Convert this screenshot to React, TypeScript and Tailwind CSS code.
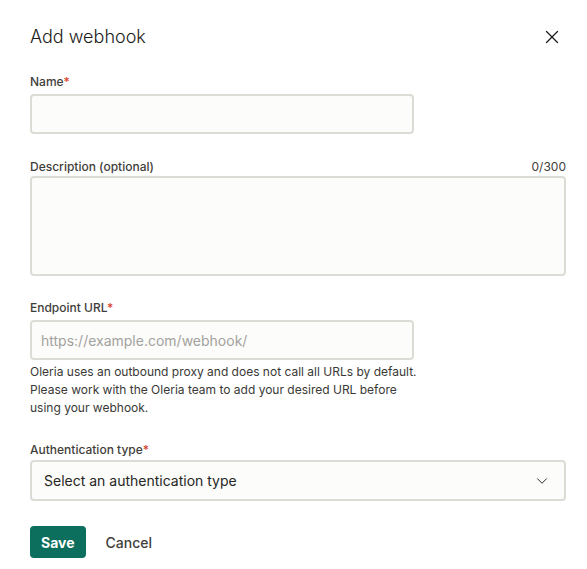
import { X, ChevronDown } from "lucide-react";

function Label(props: { text: string; required?: boolean; right?: string; className?: string }) {
  return (
    <div className={`flex items-center justify-between text-[12px] leading-[16px] font-medium text-[#3f3e3b] ${props.className ?? ""}`}>
      <span>
        {props.text}
        {props.required && <span className="text-[#d9442e]">*</span>}
      </span>
      {props.right && <span className="font-normal text-[#3f3e3b]">{props.right}</span>}
    </div>
  );
}

const field =
  "block rounded-[4px] border-2 border-[#dcdbd6] bg-[#fcfcfa] px-[9px] text-[14px] text-[#262624] outline-none placeholder:text-[#a3a29e]";

export default function App() {
  return (
    <div className="w-[587px] h-[569px] bg-white font-['Inter',sans-serif] pl-[30px] pr-[21px] pt-[25px]">
      <div className="flex items-center justify-between">
        <h1 className="text-[18px] leading-[24px] font-light text-[#1c1c1a]">Add webhook</h1>
        <button className="mr-[3px] text-[#1c1c1a]">
          <X size={22} strokeWidth={1.4} />
        </button>
      </div>

      <Label text="Name" required className="mt-[25px]" />
      <input className={`${field} mt-[4px] h-[40px] w-[384px]`} />

      <Label text="Description (optional)" right="0/300" className="mt-[25px]" />
      <textarea className={`${field} mt-[1px] h-[100px] w-full resize-none py-2`} />

      <Label text="Endpoint URL" required className="mt-[24px]" />
      <input
        className={`${field} mt-[4px] h-[40px] w-[384px]`}
        placeholder="https://example.com/webhook/"
      />
      <p className="mt-[3px] w-[390px] text-[12px] leading-[18px] text-[#3a3936]">
        Oleria uses an outbound proxy and does not call all URLs by default. Please work with the Oleria team to add your desired URL before using your webhook.
      </p>

      <Label text="Authentication type" required className="mt-[25px]" />
      <div className={`${field} mt-[2px] h-[41px] w-full flex items-center justify-between pl-[12px] pr-[13px]`}>
        <span className="text-[14px] text-[#262624]">Select an authentication type</span>
        <ChevronDown size={18} strokeWidth={1.3} className="text-[#262624]" />
      </div>

      <div className="mt-[25px] flex items-center gap-[20px]">
        <button className="h-[32px] rounded-[4px] bg-[#0c6e5c] px-[11px] text-[14px] font-bold text-white">
          Save
        </button>
        <button className="text-[14px] font-medium text-[#3f3e3b]">Cancel</button>
      </div>
    </div>
  );
}
